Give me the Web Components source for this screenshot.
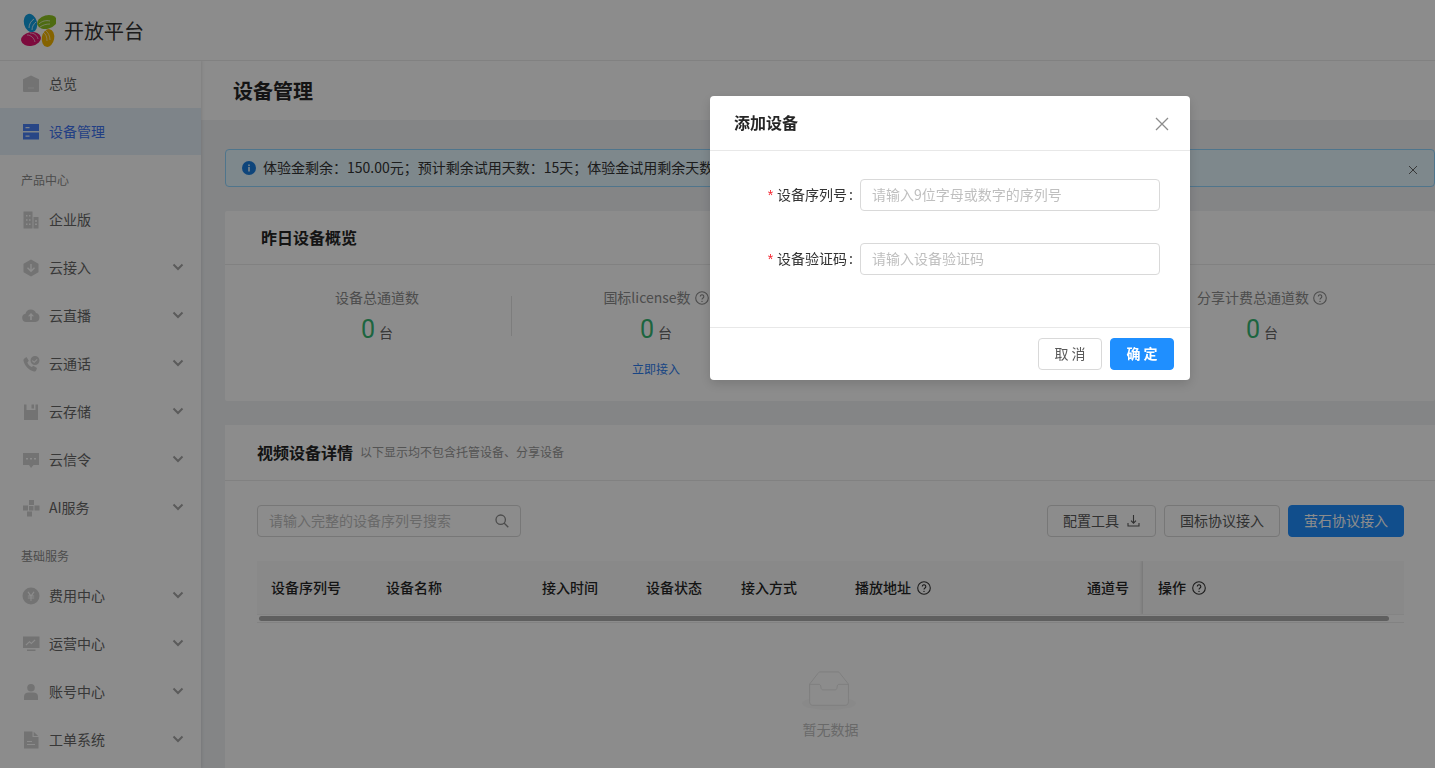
<!DOCTYPE html>
<html lang="zh-CN"><head><meta charset="utf-8"><title>设备管理</title>
<style>
html,body{margin:0;height:768px;overflow:hidden;background:#f0f2f5;font:14px "Noto Sans CJK SC","Noto Sans",sans-serif;color:#333}
</style></head><body>
<app-shell>
  <side-nav slot="nav">
    <nav-item icon="home">总览</nav-item>
    <nav-item icon="server" active>设备管理</nav-item>
    <nav-group>产品中心</nav-group>
    <nav-item icon="building">企业版</nav-item>
    <nav-item icon="hex" arrow>云接入</nav-item>
    <nav-item icon="cloud" arrow>云直播</nav-item>
    <nav-item icon="phone" arrow>云通话</nav-item>
    <nav-item icon="disk" arrow>云存储</nav-item>
    <nav-item icon="chat" arrow>云信令</nav-item>
    <nav-item icon="cubes" arrow>AI服务</nav-item>
    <nav-group>基础服务</nav-group>
    <nav-item icon="yen" arrow>费用中心</nav-item>
    <nav-item icon="chart" arrow>运营中心</nav-item>
    <nav-item icon="user" arrow>账号中心</nav-item>
    <nav-item icon="doc" arrow>工单系统</nav-item>
  </side-nav>
  <page-title slot="title">设备管理</page-title>
  <info-alert>体验金剩余：150.00元；预计剩余试用天数：15天；体验金试用剩余天数：15天</info-alert>
  <overview-card></overview-card>
  <device-panel></device-panel>
</app-shell>
<modal-dialog heading="添加设备">
  <form-row label="设备序列号" hint="请输入9位字母或数字的序列号"></form-row>
  <form-row label="设备验证码" hint="请输入设备验证码"></form-row>
</modal-dialog>
<script>
const help=(s=14,c='currentColor')=>`<svg width="${s}" height="${s}" viewBox="0 0 14 14" fill="none" stroke="${c}" style="display:block"><circle cx="7" cy="7" r="6.300" stroke-width="1.100"/><path d="M5.300 5.500a1.750 1.750 0 1 1 2.700 1.500c-.6.400-1 .7-1 1.500" stroke-width="1.100"/><circle cx="7" cy="10.400" r=".7" fill="${c}" stroke="none"/></svg>`;
const ICONS={
home:'<path d="M9 .5 17 4.200V16a1 1 0 0 1-1 1H2a1 1 0 0 1-1-1V4.200z"/><path d="M6 12.500h6v1H6z" fill="#fff" opacity=".5"/>',
server:'<path fill-rule="evenodd" d="M1 1h16v7H1zM1 9.500h16v7H1zM3.500 4v1.200h4V4zM3.500 12.500v1.200h4v-1.200z"/>',
building:'<path fill-rule="evenodd" d="M1.500 .5h9v17h-9zM11.500 6h5v11.500h-5zM4 4v1.500h1.500V4zM7 4v1.500h1.500V4zM4 8.200v1.500h1.500V8.200zM7 8.200v1.500h1.500V8.200zM4 12.500V14h1.500v-1.500zM7 12.500V14h1.500v-1.500zM13 9.200v1.500h2V9.200zM13 12.500V14h2v-1.500z"/>',
hex:'<path fill-rule="evenodd" d="M9 .5 16.500 4.700v8.600L9 17.500 1.500 13.300V4.700zM8.300 5v5.500L6 8.300l-1 1 4 4 4-4-1-1-2.300 2.200V5z"/>',
cloud:'<path fill-rule="evenodd" d="M13.500 15H4.200A4.200 4.200 0 0 1 3.500 6.700 5.500 5.500 0 0 1 14 6a4.600 4.600 0 0 1-.5 9zM9 6 6 9.300h2.200V13h1.600V9.300H12z"/>',
phone:'<path d="M4.500 2 6.800 5.800 5.400 7.500c.6 2 2.300 3.800 4.400 4.600l1.500-1.400L15 13l-.7 2.300c-.4 1-1.500 1.500-2.500 1.200C6.500 15 2.800 11 1.500 5.700c-.2-1 .3-2 1.200-2.500z"/><path fill-rule="evenodd" d="M13 1a4.500 4.500 0 1 1 0 9 4.500 4.500 0 0 1 0-9zm-2.400 4.300-.7.700 2.300 2 3.300-3.300-.7-.7-2.600 2.500z"/>',
disk:'<path fill-rule="evenodd" d="M2 1.500h2.500V7h9V1.500H16V17H2zM9.500 1.500h2.500v4H9.500z"/>',
chat:'<path fill-rule="evenodd" d="M1 2h16v12h-5.500L9 17l-2-3H1zM4 7v1.500h2V7zM8 7v1.500h2V7zM12 7v1.500h2V7z"/>',
cubes:'<path d="M7 1h5v5H7zM1 6.500h5v5H1zM7 7h4.500v4.500H7zM12.500 6.500H17.500v5h-5zM5 12.500h5V17.500H5z"/>',
yen:'<path fill-rule="evenodd" d="M9 .5a8.500 8.500 0 1 1 0 17 8.500 8.500 0 0 1 0-17zM6.500 4.500l-1 .6L7.700 8.500H5.800v1h2.700v1H5.800v1h2.700V14h1v-2.500h2.700v-1H9.500v-1h2.700v-1h-1.900l2.200-3.400-1-.6L9 8z"/>',
chart:'<path fill-rule="evenodd" d="M1 1.500h16.500V13H1zM3.500 9.800l.8.800L7.500 7.600 9.300 9.300l4.200-4-.8-.8-3.400 3.200-1.800-1.700z"/><path d="M5 14.500h8.500v1.500H5z"/>',
user:'<circle cx="9" cy="4.800" r="3.800"/><path d="M2 17v-3.500C2 11 4 9.500 6.500 9.500h5c2.500 0 4.500 1.500 4.500 4V17z"/>',
doc:'<path fill-rule="evenodd" d="M2 .5h8.500V6H16.500v11.500H2zM5 10v1h5v-1zM5 13v1h8v-1z"/><path d="M11.700.8 16.200 5h-4.500z"/>'
};
const logo=`<svg width="36" height="36" viewBox="0 0 36 36"><ellipse cx="10.500" cy="11" rx="6.500" ry="9.300" fill="#119fe0" transform="rotate(-15 10.500 11)"/><path d="M9 16c0-4 2-7 5-9M12 18c0-4 2-6 4-8" stroke="#fff" stroke-opacity=".75" fill="none"/><ellipse cx="27" cy="10" rx="10" ry="6.800" fill="#8fc31f" transform="rotate(-15 27 10)"/><path d="M19 12c3-3 7-4 11-3M20 15c3-2 6-3 10-3" stroke="#fff" stroke-opacity=".65" fill="none"/><ellipse cx="11" cy="27" rx="10" ry="6.800" fill="#e3146f" transform="rotate(-10 11 27)"/><path d="M10 21c4 0 7 2 8 6M7 23c4 0 7 3 8 7" stroke="#fff" stroke-opacity=".6" fill="none"/><ellipse cx="28" cy="26" rx="6.200" ry="9" fill="#f2b500" transform="rotate(10 28 26)"/><path d="M23 20c3 2 4 5 4 9M25 18c3 2 5 6 5 10" stroke="#fff" stroke-opacity=".6" fill="none"/></svg>`;
function el(name,css,html){
  customElements.define(name,class extends HTMLElement{
    constructor(){super();this.attachShadow({mode:'open'});}
    connectedCallback(){this.shadowRoot.innerHTML=`<style>${css}</style>${typeof html==='function'?html(this):html}`;}
  });
}
el('app-shell',`
:host{display:block;height:768px;overflow:hidden}
header{height:60px;background:#fff;box-shadow:0 1px 0 #ebebeb;position:relative;z-index:2;display:flex;align-items:center;padding-left:20px;gap:8px;font-size:20px;color:#333}
header svg{display:block}
.row{display:flex;height:708px}
.nav{flex:none;width:201px}
main{flex:1;min-width:0;display:flex;flex-direction:column}
.content{padding:29px 0 0 24px;display:flex;flex-direction:column;gap:24px}
`,()=>`<header>${logo}<span>开放平台</span></header><div class="row"><div class="nav"><slot name="nav"></slot></div><main><slot name="title"></slot><div class="content"><slot></slot></div></main></div>`);
el('side-nav',`:host{display:block;height:708px;width:201px;background:#fff;box-shadow:1px 0 3px rgba(0,0,0,.1);position:relative;z-index:1;overflow:hidden}`,`<slot></slot>`);
el('nav-group',`:host{display:block;height:32px;padding-top:8px;line-height:32px;font-size:12px;color:#8c8c8c;padding-left:21px}`,`<slot></slot>`);
el('nav-item',`
:host{display:flex;align-items:center;height:48px;color:#666;box-sizing:border-box;padding-left:22px;position:relative}
:host([active]){background:#e6f0fa;color:#3e74f0;height:47px;margin-bottom:1px}
svg.i{width:18px;height:18px;fill:#d2d2d2;margin-right:9px;flex:none}
:host([active]) svg.i{fill:#4a80f5}
svg.a{position:absolute;left:172px;top:19px}
span{margin-bottom:2px}
`,h=>`<svg class="i" viewBox="0 0 18 18">${ICONS[h.getAttribute('icon')]}</svg><span><slot></slot></span>${h.hasAttribute('arrow')?'<svg class="a" width="12" height="9" viewBox="0 0 12 9" fill="none" stroke="#a6a6a6" stroke-width="2"><path d="M1.500 1.500 6 6l4.500-4.500"/></svg>':''}`);
el('page-title',`:host{display:block;height:60px;box-sizing:border-box;background:#fff;padding:1px 0 0 32px;line-height:60px;font-size:20px;font-weight:700;color:#262626}`,`<slot></slot>`);
el('info-alert',`
:host{display:flex;align-items:center;height:38px;box-sizing:border-box;background:#e6f7ff;border:1px solid #91d5ff;border-radius:4px;padding-left:16px;color:#333;position:relative;white-space:nowrap}
svg.i{margin-right:7px;flex:none}
svg.x{position:absolute;right:16px;top:15px}
`,`<svg class="i" width="14" height="14" viewBox="0 0 14 14"><circle cx="7" cy="7" r="7" fill="#1a7fe0"/><rect x="6.200" y="6" width="1.600" height="4.500" fill="#e6f7ff"/><rect x="6.200" y="3.500" width="1.600" height="1.600" fill="#e6f7ff"/></svg><span style="margin-bottom:2px"><slot></slot></span><svg class="x" width="10" height="10" viewBox="0 0 10 10" stroke="#666" fill="none"><path d="M1 1l8 8M9 1 1 9"/></svg>`);
el('stat-item',`
:host{display:flex;flex-direction:column;align-items:center;position:relative;text-align:center}
.l{display:flex;align-items:center;gap:4px;height:22px;line-height:22px;color:#8c8c8c;margin-top:21px}
.l svg{margin-top:2px}
.v{display:flex;align-items:baseline;gap:4px;height:44px;line-height:44px;font-size:25px;font-family:Roboto,sans-serif;font-weight:400;color:#35b874}
.v b{font:400 14px/44px "Noto Sans CJK SC",sans-serif;color:#666}
a{font-size:12px;color:#2f7ff0;line-height:20px;margin-top:7px;text-decoration:none}
`,h=>h.hasAttribute('label')?`<div class="l">${h.getAttribute('label')}${h.hasAttribute('help')?help(14,'#8c8c8c'):''}</div><div class="v">0<b>台</b></div>${h.hasAttribute('link')?`<a>${h.getAttribute('link')}</a>`:''}`:'');
el('overview-card',`
:host{display:block;height:190px;background:#fff;border-radius:2px}
.h{height:53px;border-bottom:1px solid #ececec;padding-left:36px;line-height:52px;font-size:16px;font-weight:700;color:#262626}
.b{display:grid;grid-template-columns:268px 290px 319px 1fr;margin-left:18px;position:relative;padding-right:31px}
.d{position:absolute;left:268px;top:31px;width:1px;height:40px;background:#e3e3e3}
`,`<div class="h">昨日设备概览</div><div class="b"><stat-item label="设备总通道数"></stat-item><stat-item label="国标license数" help link="立即接入"></stat-item><stat-item></stat-item><stat-item label="分享计费总通道数" help></stat-item><i class="d"></i></div>`);
el('ui-button',`
:host{display:inline-flex;align-items:center;justify-content:center;gap:8px;height:32px;padding-bottom:2px;box-sizing:border-box;border:1px solid #d9d9d9;border-radius:4px;background:#fff;color:#595959;white-space:pre}
:host([primary]){background:#1f8fff;border-color:#1f8fff;color:#fff}
`,`<slot></slot>`);
el('device-panel',`
:host{display:block;height:400px;background:#fff}
.h{height:53px;padding-bottom:2px;border-bottom:1px solid #ececec;padding-left:32px;display:flex;align-items:center;gap:7px}
.h b{font-size:16px;color:#262626;font-weight:700}
.h span{font-size:12px;color:#999}
.tb{display:flex;align-items:center;padding:24px 31px 0 32px;gap:8px}
.s{width:264px;height:32px;box-sizing:border-box;border:1px solid #d9d9d9;border-radius:4px;display:flex;align-items:center;padding:0 11px 2px 11px;color:#bfbfbf;justify-content:space-between;margin-right:auto}
.s svg{margin-top:2px}
.t{margin:24px 31px 0 32px;height:53px;background:#fafafa;display:grid;grid-template-columns:115px 156px 104px 95px 114px 232px 70px 1fr;align-items:center;color:#262626;font-weight:500;overflow:hidden}
.t div{padding:0 0 2px 14px;display:flex;align-items:center;gap:6px}
.t svg{margin-top:3px}
.t .n{padding:0 14px 2px 0;justify-content:flex-end}
.t .o{padding-left:15px;height:100%;box-shadow:-1px 0 3px rgba(0,0,0,.16)}
.sb{margin:0 31px 0 32px;height:9px;border-top:1px solid #f0f0f0;border-bottom:1px solid #ededed;position:relative;box-sizing:border-box}
.sb i{position:absolute;left:2px;width:1130px;top:1px;height:5px;border-radius:3px;background:#adadad}
.e{display:flex;flex-direction:column;align-items:center;margin:48px 31px 0 32px;color:#bfbfbf}
.e svg{display:block;margin-left:-4px}
.e span{margin-top:9px}
`,`<div class="h"><b>视频设备详情</b><span>以下显示均不包含托管设备、分享设备</span></div>
<div class="tb"><div class="s">请输入完整的设备序列号搜索<svg width="14" height="14" viewBox="0 0 14 14" fill="none" stroke="#8c8c8c" stroke-width="1.300"><circle cx="5.700" cy="5.700" r="4.700"/><path d="m9 9 4.300 4.300"/></svg></div>
<ui-button style="width:109px">配置工具<svg width="13" height="13" viewBox="0 0 13 13" fill="none" stroke="#595959" stroke-width="1.100"><path d="M6.500 1v8M4 6.700 6.500 9.200 9 6.700M1 9v3h11V9"/></svg></ui-button><ui-button style="width:116px">国标协议接入</ui-button><ui-button primary style="width:116px">萤石协议接入</ui-button></div>
<div class="t"><div>设备序列号</div><div>设备名称</div><div>接入时间</div><div>设备状态</div><div>接入方式</div><div>播放地址${help(14,'#333')}</div><div class="n">通道号</div><div class="o">操作${help(14,'#333')}</div></div>
<div class="sb"><i></i></div>
<div class="e"><svg width="54" height="39" viewBox="0 0 64 41" preserveAspectRatio="none"><g transform="translate(0 1)" fill="none" fill-rule="evenodd"><ellipse fill="#fafafa" cx="32" cy="33" rx="32" ry="7"/><g fill-rule="nonzero" stroke="#e4e4e4"><path d="M55 12.760 44.854 1.258C44.367.474 43.656 0 42.907 0H21.093c-.749 0-1.460.474-1.947 1.257L9 12.761V22h46v-9.240z" fill="#fff"/><path d="M41.613 15.931c0-1.605.994-2.930 2.227-2.931H55v18.137C55 33.260 53.680 35 52.050 35h-40.100C10.320 35 9 33.259 9 31.137V13h11.160c1.233 0 2.227 1.323 2.227 2.928v.022c0 1.605 1.005 2.901 2.237 2.901h14.752c1.232 0 2.237-1.308 2.237-2.913v-.007z" fill="#fff"/></g></g></svg><span>暂无数据</span></div>`);
el('form-row',`
:host{display:flex;align-items:center;height:32px;color:#333}
label{width:150px;flex:none;text-align:right;white-space:nowrap;padding:0 7px 2px 0;box-sizing:border-box}
label i{color:#f5222d;font-style:normal;font-family:"Liberation Sans",sans-serif;margin-right:4px}
label u{text-decoration:none;margin-left:2px}
.in{width:300px;height:32px;box-sizing:border-box;border:1px solid #d9d9d9;border-radius:4px;padding-left:11px;line-height:28px;color:#bfbfbf}
`,h=>`<label><i>*</i>${h.getAttribute('label')}<u>:</u></label><div class="in">${h.getAttribute('hint')}</div>`);
el('modal-dialog',`
:host{position:fixed;inset:0;background:rgba(0,0,0,.45);z-index:10;display:block}
.m{position:absolute;left:710px;top:96px;width:480px;height:284px;background:#fff;border-radius:4px;box-shadow:0 4px 12px rgba(0,0,0,.15);display:flex;flex-direction:column}
.h{height:52px;padding-bottom:2px;border-bottom:1px solid #e8e8e8;padding-left:24px;display:flex;align-items:center;font-size:16px;font-weight:700;color:#262626;position:relative;line-height:1}
.h svg{position:absolute;left:445px;top:21px}
.b{flex:1;padding:28px 0 0 0;display:flex;flex-direction:column;gap:32px}
.f{height:52px;border-top:1px solid #e8e8e8;display:flex;align-items:center;justify-content:flex-end;gap:8px;padding-right:16px}
ui-button{width:64px}
ui-button[primary]{font-weight:700}
`,h=>`<div class="m" role="dialog"><div class="h">${h.getAttribute('heading')}<svg width="14" height="14" viewBox="0 0 14 14" stroke="#8c8c8c" stroke-width="1.300" fill="none"><path d="m1 1 12 12M13 1 1 13"/></svg></div><div class="b"><slot></slot></div><div class="f"><ui-button>取 消</ui-button><ui-button primary>确 定</ui-button></div></div>`);
</script>
</body></html>
